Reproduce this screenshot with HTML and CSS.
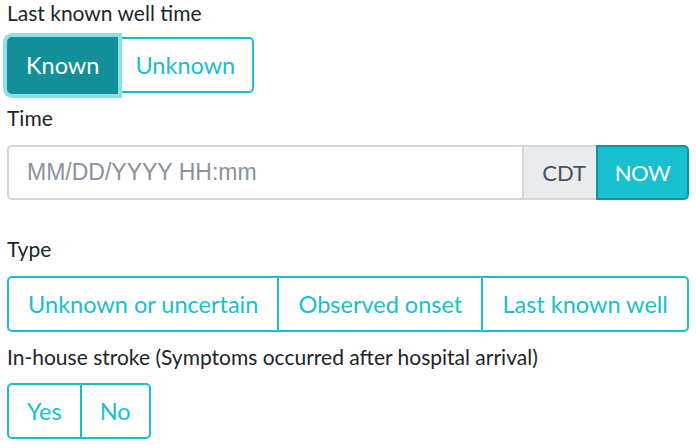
FILE: index.html
```html
<!DOCTYPE html>
<html>
<head>
<meta charset="utf-8">
<link rel="stylesheet" href="styles.css">
</head>
<body>
<div class="form">
  <div class="label l1">Last known well time</div>
  <div class="group g1">
    <button class="btn active">Known</button>
    <button class="btn">Unknown</button>
  </div>
  <div class="label l2">Time</div>
  <div class="input-group">
    <input class="field" type="text" placeholder="MM/DD/YYYY HH:mm">
    <span class="addon">CDT</span>
    <button class="now">NOW</button>
  </div>
  <div class="label l3">Type</div>
  <div class="group full">
    <button class="btn">Unknown or uncertain</button>
    <button class="btn">Observed onset</button>
    <button class="btn">Last known well</button>
  </div>
  <div class="label l4">In-house stroke (Symptoms occurred after hospital arrival)</div>
  <div class="group">
    <button class="btn">Yes</button>
    <button class="btn">No</button>
  </div>
</div>
</body>
</html>
```

FILE: styles.css
```css
* { box-sizing: border-box; }
html, body { margin: 0; padding: 0; background: #fff; }
body {
  font-family: Lato, "Open Sans", sans-serif;
  font-size: 21px;
  color: #212529;
}
.form { padding: 0 7px; width: 696px; }
.label { line-height: 24px; }
.l1 { margin-top: 1px; margin-bottom: 12px; }
.l2 { margin-top: 12px; margin-bottom: 15px; }
.l3 { margin-top: 37px; margin-bottom: 15px; }
.l4 { margin-top: 13px; margin-bottom: 14px; }

.group { display: inline-flex; vertical-align: top; }
.group.full { display: flex; width: 682px; }
.btn {
  font-family: Lato, "Open Sans", sans-serif;
  font-size: 23.5px;
  line-height: 26px;
  color: #17bfcf;
  background: #fff;
  border: 2px solid #17bfcf;
  padding: 13px 18px;
  margin: 0;
  height: 56px;
  cursor: pointer;
}
.btn + .btn { margin-left: -2px; }
.btn:first-child { border-radius: 5px 0 0 5px; }
.btn:last-child { border-radius: 0 5px 5px 0; }
.full .btn { flex: 1 1 auto; }
.g1 .btn { padding-left: 17px; padding-right: 17px; }
.btn.active {
  background: #138f9a;
  border-color: #138f9a;
  color: #fff;
  box-shadow: 0 0 0 4px #8fdfe7;
  position: relative;
  z-index: 1;
  height: 57px;
  line-height: 27px;
}
.g1 { height: 57px; }

.input-group { display: flex; width: 682px; height: 55px; }
.field {
  flex: 1 1 auto;
  min-width: 0;
  font-family: "Liberation Sans", Arial, sans-serif;
  font-size: 23px;
  color: #495057;
  border: 2px solid #d3d8dc;
  border-right: 0;
  border-radius: 5px 0 0 5px;
  padding: 0 18px;
  margin: 0;
  outline: none;
}
.field::placeholder { color: #8a939b; }
.addon {
  display: flex;
  align-items: center;
  justify-content: flex-end;
  padding-right: 10px;
  width: 74px;
  background: #e9ecef;
  border: 2px solid #d3d8dc;
  border-right: 0;
  color: #495057;
  font-size: 22px;
}
.now {
  font-family: Lato, "Open Sans", sans-serif;
  font-size: 22px;
  letter-spacing: -0.5px;
  color: #fff;
  background: #17bfcf;
  border: 2px solid #12939f;
  border-radius: 0 5px 5px 0;
  padding: 0;
  margin: 0;
  width: 93px;
}
```
